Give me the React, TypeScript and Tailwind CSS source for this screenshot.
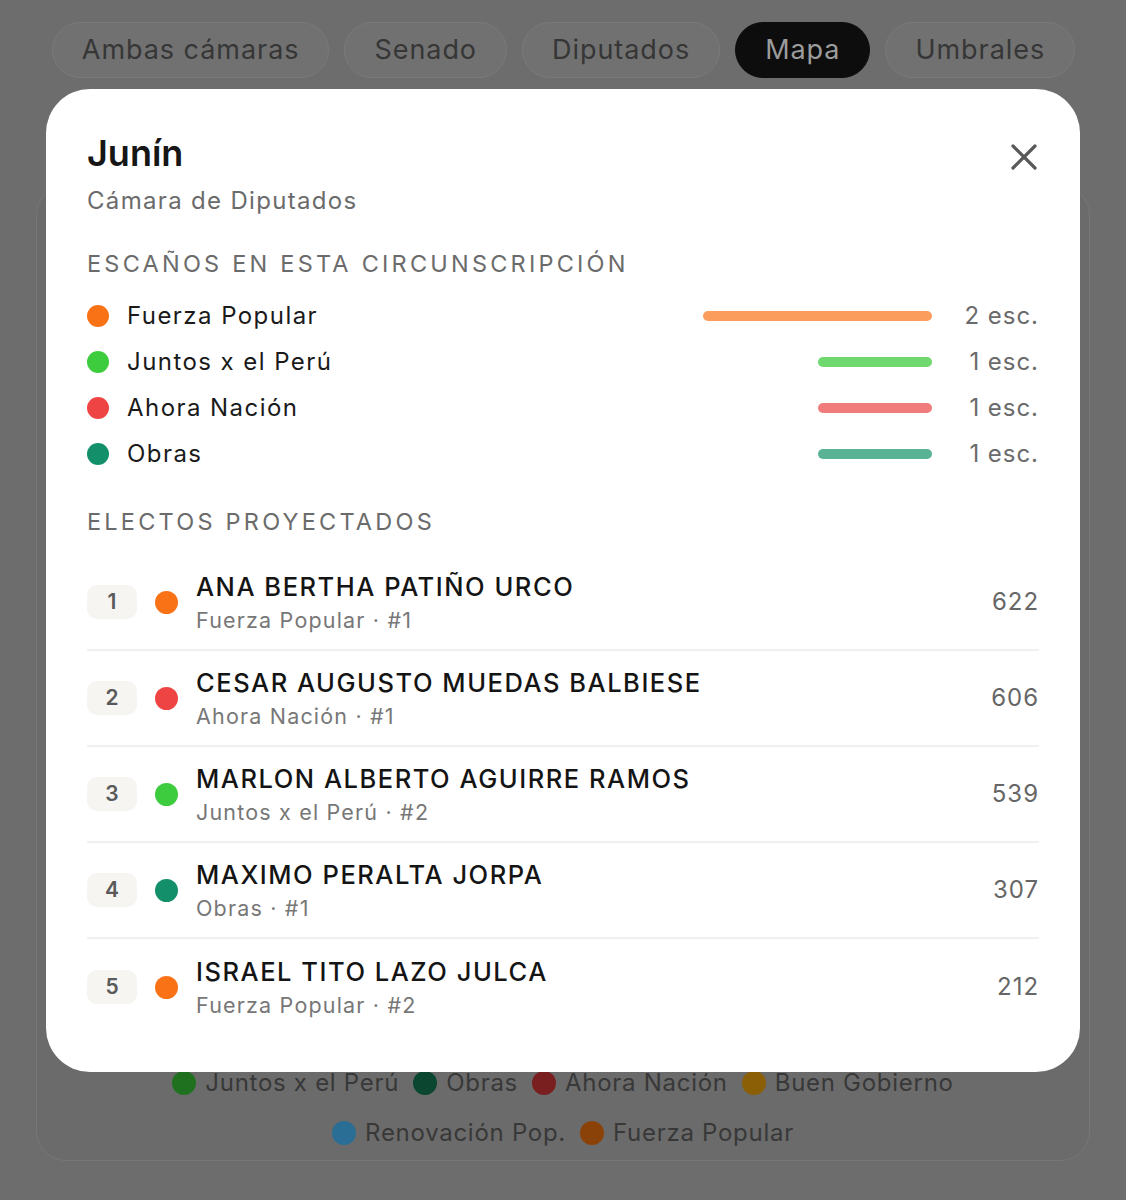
import React from "react";

const tabs = [
  { label: "Ambas cámaras", active: false },
  { label: "Senado", active: false },
  { label: "Diputados", active: false },
  { label: "Mapa", active: true },
  { label: "Umbrales", active: false },
];

const seats = [
  { name: "Fuerza Popular", dot: "bg-[#f97316]", bar: "bg-[#fb9d5c]", seats: 2 },
  { name: "Juntos x el Perú", dot: "bg-[#3dcc3d]", bar: "bg-[#6fd96f]", seats: 1 },
  { name: "Ahora Nación", dot: "bg-[#ef4444]", bar: "bg-[#f17c7c]", seats: 1 },
  { name: "Obras", dot: "bg-[#13906a]", bar: "bg-[#5ab394]", seats: 1 },
];

const electos = [
  { n: 1, name: "ANA BERTHA PATIÑO URCO", party: "Fuerza Popular · #1", dot: "bg-[#f97316]", votes: 622 },
  { n: 2, name: "CESAR AUGUSTO MUEDAS BALBIESE", party: "Ahora Nación · #1", dot: "bg-[#ef4444]", votes: 606 },
  { n: 3, name: "MARLON ALBERTO AGUIRRE RAMOS", party: "Juntos x el Perú · #2", dot: "bg-[#3dcc3d]", votes: 539 },
  { n: 4, name: "MAXIMO PERALTA JORPA", party: "Obras · #1", dot: "bg-[#13906a]", votes: 307 },
  { n: 5, name: "ISRAEL TITO LAZO JULCA", party: "Fuerza Popular · #2", dot: "bg-[#f97316]", votes: 212 },
];

const legend1 = [
  { name: "Juntos x el Perú", c: "bg-[#1f701f]" },
  { name: "Obras", c: "bg-[#0b4630]" },
  { name: "Ahora Nación", c: "bg-[#7a1f1f]" },
  { name: "Buen Gobierno", c: "bg-[#8a5f05]" },
];
const legend2 = [
  { name: "Renovación Pop.", c: "bg-[#2a6e96]" },
  { name: "Fuerza Popular", c: "bg-[#8a4208]" },
];

export default function App() {
  const maxSeats = 2;
  return (
    <div
      className="relative min-h-[1200px] w-full overflow-hidden bg-[#6d6d6d]"
      style={{ fontFamily: "Inter, 'Noto Sans', 'Liberation Sans', sans-serif" }}
    >
      {/* Tabs */}
      <div className="flex justify-center gap-[15px] pt-[22px] pl-[1px]">
        {tabs.map((t) => (
          <div
            key={t.label}
            className={
              t.active
                ? "flex h-[56px] items-center rounded-full border border-[#0d0d0d] bg-[#0d0d0d] px-[29px] text-[27px] tracking-[0.035em] text-[#9c9c9c]"
                : "flex h-[56px] items-center rounded-full border border-[#7a7a7a] bg-[#717171] px-[29px] text-[27px] tracking-[0.035em] text-[#363636]"
            }
          >
            {t.label}
          </div>
        ))}
      </div>

      {/* Background card */}
      <div className="mx-[36px] mt-[107px] flex h-[976px] flex-col justify-end rounded-[30px] border border-[#777777] bg-[#6b6b6b] pb-[9px]">
        <div className="flex flex-col items-center gap-[14px] text-[24px] tracking-[0.03em] text-[#383838]">
          <div className="flex gap-[14px]">
            {legend1.map((l) => (
              <div key={l.name} className="flex items-center gap-[9px]">
                <span className={`h-[24px] w-[24px] rounded-full ${l.c}`} />
                <span>{l.name}</span>
              </div>
            ))}
          </div>
          <div className="flex gap-[14px]">
            {legend2.map((l) => (
              <div key={l.name} className="flex items-center gap-[9px]">
                <span className={`h-[24px] w-[24px] rounded-full ${l.c}`} />
                <span>{l.name}</span>
              </div>
            ))}
          </div>
        </div>
      </div>

      {/* Modal */}
      <div className="absolute left-[46px] top-[89px] w-[1034px] rounded-[44px] bg-white px-[41px] pb-[37px] pt-[40px]">
        <div className="flex items-start justify-between">
          <div>
            <h2 className="text-[36px] font-semibold leading-[48px] text-[#161616]">Junín</h2>
            <p className="mt-[8px] text-[24px] leading-[32px] tracking-[0.055em] text-[#6b6b6b]">Cámara de Diputados</p>
          </div>
          <button className="mr-[1px] mt-[14px] text-[#595959]">
            <svg width="28" height="28" viewBox="0 0 28 28" fill="none" stroke="currentColor" strokeWidth="3.2" strokeLinecap="round">
              <path d="M3 3L25 25M25 3L3 25" />
            </svg>
          </button>
        </div>

        <h3 className="mt-[31px] text-[23.5px] leading-[32px] tracking-[0.137em] text-[#6b6b6b]">ESCAÑOS EN ESTA CIRCUNSCRIPCIÓN</h3>
        <div className="mt-[20px] flex flex-col gap-[14px]">
          {seats.map((s) => (
            <div key={s.name} className="flex h-[32px] items-center">
              <span className={`h-[22px] w-[22px] shrink-0 rounded-full ${s.dot}`} />
              <span className="ml-[18px] flex-1 text-[24px] tracking-[0.06em] text-[#1a1a1a]">{s.name}</span>
              <div className="flex w-[229px] justify-end">
                <div
                  className={`h-[10px] rounded-full ${s.bar}`}
                  style={{ width: `${(s.seats / maxSeats) * 229}px` }}
                />
              </div>
              <span className="w-[107px] text-right text-[24px] tracking-[0.04em] text-[#6b6b6b]">{s.seats} esc.</span>
            </div>
          ))}
        </div>

        <h3 className="mt-[36px] text-[23.5px] leading-[32px] tracking-[0.137em] text-[#6b6b6b]">ELECTOS PROYECTADOS</h3>
        <div className="mt-[17px] flex flex-col">
          {electos.map((e, i) => (
            <div
              key={e.n}
              className={`flex h-[96px] items-center ${i < electos.length - 1 ? "border-b-2 border-[#f0f0f0]" : ""}`}
            >
              <div className="flex h-[34px] w-[50px] shrink-0 items-center justify-center rounded-[10px] bg-[#f6f5f2] text-[21px] font-semibold text-[#5a5a5a]">
                {e.n}
              </div>
              <span className={`ml-[18px] h-[23px] w-[23px] shrink-0 rounded-full ${e.dot}`} />
              <div className="ml-[18px] flex flex-1 flex-col">
                <span className="text-[25.5px] font-medium leading-[32px] tracking-[0.06em] text-[#141414]">{e.name}</span>
                <span className="mt-[3px] text-[21.5px] leading-[28px] tracking-[0.055em] text-[#777777]">{e.party}</span>
              </div>
              <span className="text-[24px] tracking-[0.04em] text-[#666666]">{e.votes}</span>
            </div>
          ))}
        </div>
      </div>
    </div>
  );
}
